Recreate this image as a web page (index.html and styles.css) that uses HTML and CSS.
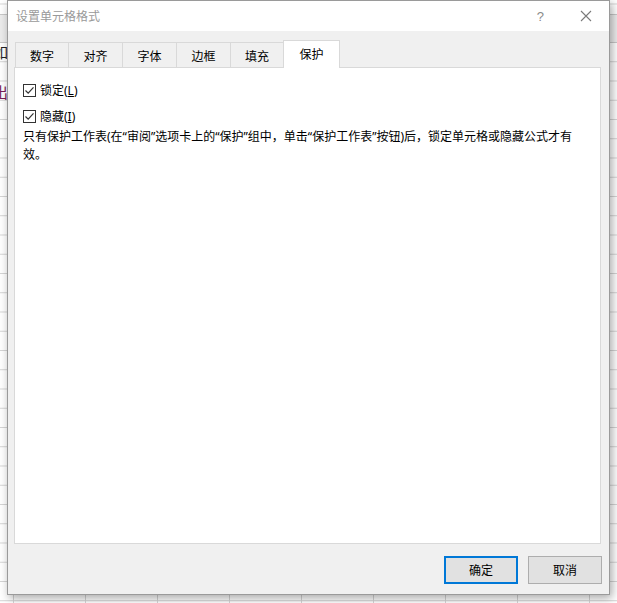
FILE: index.html
```html
<!DOCTYPE html>
<html lang="zh-CN">
<head>
<meta charset="utf-8">
<title>设置单元格格式</title>
<link rel="stylesheet" href="styles.css">
</head>
<body>
<div class="sheet">
  <div class="header-band"></div>
  <span class="cell-text cell-a">如</span>
  <span class="cell-text cell-b">出</span>

  <div class="dialog">
    <div class="titlebar">
      <span class="title">设置单元格格式</span>
      <span class="help">?</span>
      <svg class="close" width="12" height="12" viewBox="0 0 12 12"><path d="M1 1 L11 11 M11 1 L1 11" stroke="#7a7a7a" stroke-width="1.1" fill="none"/></svg>
    </div>
    <div class="body">
      <div class="tabs">
        <div class="tab t1">数字</div>
        <div class="tab">对齐</div>
        <div class="tab">字体</div>
        <div class="tab">边框</div>
        <div class="tab t5">填充</div>
        <div class="tab active">保护</div>
      </div>
      <div class="panel">
        <label class="check">
          <span class="box"><svg width="11" height="11" viewBox="0 0 11 11"><path d="M1.5 5.5 L4.2 8.2 L9.5 2.3" stroke="#333" stroke-width="1.2" fill="none"/></svg></span>
          <span class="lbl">锁定(<u>L</u>)</span>
        </label>
        <label class="check">
          <span class="box"><svg width="11" height="11" viewBox="0 0 11 11"><path d="M1.5 5.5 L4.2 8.2 L9.5 2.3" stroke="#333" stroke-width="1.2" fill="none"/></svg></span>
          <span class="lbl">隐藏(<u>I</u>)</span>
        </label>
        <p class="note">只有保护工作表(在“审阅”选项卡上的“保护”组中，单击“保护工作表”按钮)后，锁定单元格或隐藏公式才有效。</p>
      </div>
      <div class="footer">
        <button class="btn primary">确定</button>
        <button class="btn">取消</button>
      </div>
    </div>
  </div>
</div>
</body>
</html>
```
FILE: styles.css
```css
* { box-sizing: border-box; }
html, body { margin: 0; padding: 0; }
body {
  width: 617px;
  height: 603px;
  overflow: hidden;
  font-family: "Noto Sans", "Noto Sans CJK SC", sans-serif;
  font-size: 12px;
  color: #000;
  background: #fff;
}
.sheet {
  position: relative;
  width: 617px;
  height: 603px;
  background-color: #fff;
  background-image:
    linear-gradient(90deg, #d4d4d4 1px, transparent 1px),
    linear-gradient(#d4d4d4 1px, transparent 1px);
  background-size: 72px 100%, 100% 19.25px;
  background-position: 13px 0, 0 42px;
}
.header-band {
  position: absolute;
  left: 0; top: 14px;
  width: 617px; height: 29px;
  background: #ececec;
  border-top: 1px solid #c8c8c8;
  border-bottom: 1px solid #c8c8c8;
}
.cell-text {
  position: absolute;
  font-family: "Noto Sans CJK SC", sans-serif;
  font-size: 15px;
  line-height: 16px;
}
.cell-a { left: -7px; top: 44px; color: #222; }
.cell-b { left: -7px; top: 84px; color: #7a2058; }

.dialog {
  position: absolute;
  left: 7px;
  top: 0;
  width: 603px;
  height: 595px;
  border: 1px solid #9a9a9a;
  background: #f0f0f0;
  box-shadow: 2px 3px 9px rgba(0,0,0,0.35);
  display: flex;
  flex-direction: column;
}
.titlebar {
  height: 30px;
  background: #fff;
  display: flex;
  align-items: center;
  padding-left: 8px;
  flex-shrink: 0;
}
.title {
  color: #9a9a9a;
  font-size: 12px;
  flex: 1;
}
.help {
  color: #8a8a8a;
  font-family: "Liberation Sans", sans-serif;
  font-size: 13px;
  margin-right: 36px;
}
.close { margin-right: 17px; }

.body {
  flex: 1;
  padding-top: 9px;
  display: flex;
  flex-direction: column;
}
.tabs {
  display: flex;
  align-items: flex-end;
  height: 27px;
  margin-left: 7px;
  position: relative;
  z-index: 1;
}
.tab {
  width: 54px;
  height: 25px;
  border-top: 1px solid #d9d9d9;
  border-left: 1px solid #d9d9d9;
  background: #f0f0f0;
  display: flex;
  align-items: center;
  justify-content: center;
  padding-top: 1px;
  font-size: 12px;
}
.tab.t1 { width: 53px; }
.tab.t5 { width: 53px; }
.tab.active {
  width: 57px;
  height: 28px;
  margin-bottom: -1px;
  border-right: 1px solid #d9d9d9;
  background: #fff;
  padding-bottom: 2px;
}
.panel {
  margin-left: 6px;
  width: 587px;
  height: 477px;
  border: 1px solid #d9d9d9;
  background: #fff;
  padding: 16px 10px 0 8px;
  flex-shrink: 0;
}
.check {
  display: flex;
  align-items: center;
  height: 13px;
  margin-bottom: 13px;
}
.check + .check { margin-bottom: 5px; }
.box {
  width: 13px;
  height: 13px;
  border: 1px solid #333;
  background: #fff;
  display: flex;
  align-items: center;
  justify-content: center;
  margin-right: 4px;
}
.box svg { display: block; }
.lbl { font-size: 12px; line-height: 14px; }
.lbl u { text-underline-offset: 1px; }
.note {
  margin: 0;
  font-size: 12px;
  line-height: 18px;
  width: 562px;
}
.footer {
  display: flex;
  justify-content: flex-end;
  gap: 10px;
  margin-top: 12px;
  padding-right: 7px;
}
.btn {
  width: 74px;
  height: 28px;
  background: #e1e1e1;
  border: 1px solid #adadad;
  font-family: "Noto Sans", "Noto Sans CJK SC", sans-serif;
  font-size: 12px;
  color: #000;
  padding: 0;
  margin: 0;
}
.btn.primary { border: 2px solid #0078d7; }
```
